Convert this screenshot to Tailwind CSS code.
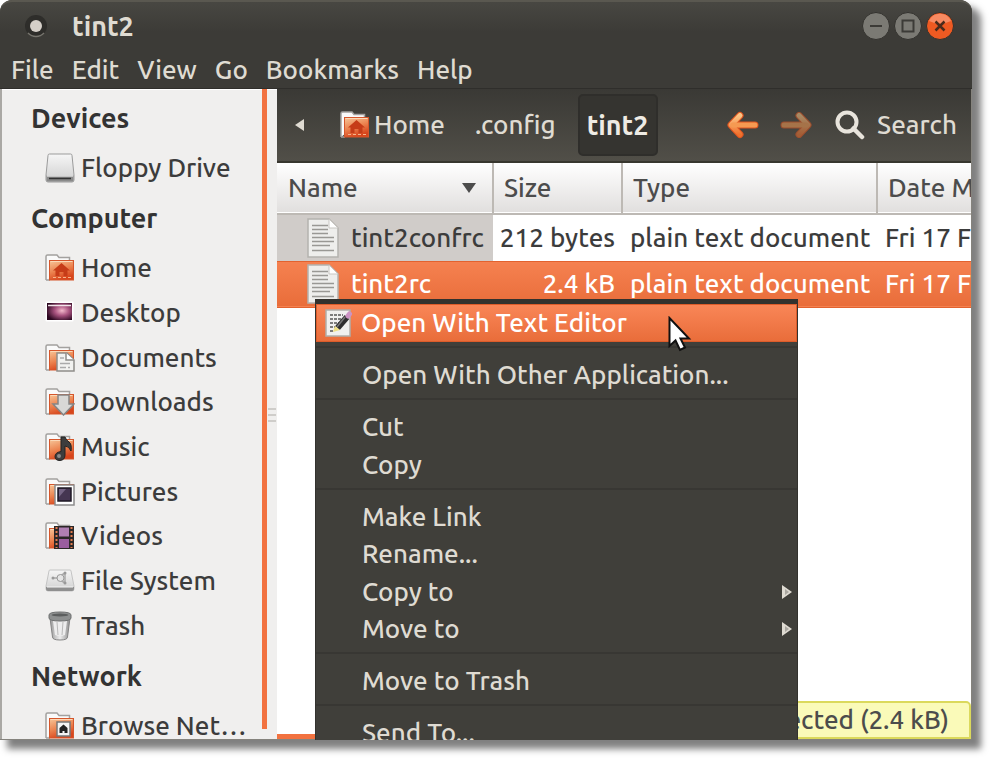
<!DOCTYPE html>
<html lang="en">

<head>
  <meta charset="UTF-8" />
  <meta name="viewport" content="width=device-width, initial-scale=1.0" />
  <title>tint2</title>
  <script src="https://cdn.jsdelivr.net/npm/@tailwindcss/browser@4"></script>
</head>

<body class="h-screen overflow-hidden bg-white pr-7 pb-[27px] font-['Ubuntu','Noto_Sans',sans-serif] text-[26px] leading-8 font-medium text-[#3c3c3c]">

  <!-- Shared icon parts -->
  <svg class="absolute size-0" aria-hidden="true">
    <defs>
      <linearGradient id="orange" x1="0" y1="0" x2="0.4" y2="1">
        <stop offset="0" stop-color="#f7c79a" />
        <stop offset="0.55" stop-color="#ec8450" />
        <stop offset="1" stop-color="#d8451c" />
      </linearGradient>
      <linearGradient id="grey" x1="0" y1="0" x2="0" y2="1">
        <stop offset="0" stop-color="#f6f6f6" />
        <stop offset="1" stop-color="#cfcfcf" />
      </linearGradient>
      <linearGradient id="bin" x1="0" y1="0" x2="1" y2="0">
        <stop offset="0" stop-color="#9a9a9a" />
        <stop offset="0.5" stop-color="#ededed" />
        <stop offset="1" stop-color="#8d8d8d" />
      </linearGradient>
      <radialGradient id="wallpaper" cx="0.6" cy="0.45" r="0.65">
        <stop offset="0" stop-color="#f3b9cb" />
        <stop offset="0.45" stop-color="#a8527f" />
        <stop offset="1" stop-color="#2b0820" />
      </radialGradient>
      <linearGradient id="arrow" x1="0" y1="0" x2="0" y2="1">
        <stop offset="0" stop-color="#fbc585" />
        <stop offset="1" stop-color="#f0702c" />
      </linearGradient>
      <symbol id="folder" viewBox="0 0 30 28">
        <path d="M1 26V2.500Q1 1 2.500 1H12l2 2.500h10.500V8" fill="#fafafa" stroke="#a3a19f" stroke-width="1.500" />
        <path d="M1 26h4" stroke="#a3a19f" stroke-width="1.500" />
        <rect x="4.500" y="6.500" width="24" height="19.500" fill="url(#orange)" stroke="#d5562b" />
        <path d="M5.500 7.500h22" stroke="#fbd9b8" />
      </symbol>
      <symbol id="house" viewBox="0 0 30 28">
        <path d="M16.500 9L8 16.500h2.500V22h4v-4h4v4h4v-5.500H25z" fill="#c63c18" />
        <path d="M8 23.500h3M13 23.500h3M18 23.500h3M23 23.500h3" stroke="#f4b58c" />
      </symbol>
      <symbol id="text-file" viewBox="0 0 32 40">
        <path d="M1 1h21l9 9v29H1z" fill="#eeeeec" stroke="#b4b2ae" stroke-width="1.500" />
        <path d="M22 1v9h9z" fill="#fff" stroke="#c8c6c2" />
        <path d="M5 7.500h16M5 11.500h16M5 15.500h16M5 19.500h22M5 23.500h22M5 27.500h18M5 32.500h22" stroke="#999894" stroke-width="1.500" />
      </symbol>
    </defs>
  </svg>

  <div class="relative flex h-full flex-col rounded-t-[12px] bg-[#3c3b37] shadow-[8px_8px_7px_1px_rgba(0,0,0,0.5)]">

    <!-- Title bar -->
    <header class="flex h-[52px] shrink-0 items-center rounded-t-[12px] border-t-2 border-[#5a5850] bg-linear-to-b from-[#484742] to-[#3c3b37] to-60% pr-[18px] pb-0.5 pl-6">
      <button aria-label="Window menu">
        <svg class="size-6" viewBox="0 0 24 24">
          <circle cx="12" cy="12" r="11" fill="#2e2d2a" />
          <path d="M4 19a11 11 0 0 0 16 0" fill="none" stroke="#77756e" stroke-width="1.500" />
          <circle cx="12" cy="12" r="6" fill="#d5cfc8" />
        </svg>
      </button>
      <h1 class="flex-1 pl-6 text-[27px] font-bold text-[#dfdbd2]">tint2</h1>
      <div class="flex gap-1">
        <button aria-label="Minimize">
          <svg class="size-7" viewBox="0 0 28 28">
            <circle cx="14" cy="14" r="13.500" fill="#7b7a74" stroke="#33322e" />
            <path d="M8 14h12" stroke="#3c3b37" stroke-width="2" />
          </svg>
        </button>
        <button aria-label="Maximize">
          <svg class="size-7" viewBox="0 0 28 28">
            <circle cx="14" cy="14" r="13.500" fill="#7b7a74" stroke="#33322e" />
            <rect x="8.500" y="8.500" width="11" height="11" fill="none" stroke="#3c3b37" stroke-width="2" />
          </svg>
        </button>
        <button aria-label="Close">
          <svg class="size-7" viewBox="0 0 28 28">
            <circle cx="14" cy="14" r="13.500" fill="#ee5a22" stroke="#33322e" />
            <path d="M3 9a12 12 0 0 1 22 0Q14 14 3 9" fill="#f78a62" />
            <path d="M9.500 9.500l9 9M18.500 9.500l-9 9" stroke="#4a2b1c" stroke-width="2.500" />
          </svg>
        </button>
      </div>
    </header>

    <!-- Menu bar -->
    <nav class="flex h-[37px] shrink-0 items-center gap-[18px] border-b border-[#2f2e2b] pl-[11px] text-[#dfdbd2]">
      <button>File</button>
      <button>Edit</button>
      <button>View</button>
      <button>Go</button>
      <button>Bookmarks</button>
      <button>Help</button>
    </nav>

    <div class="flex min-h-0 flex-1 overflow-hidden border-r border-b border-[#85837d] bg-white">

      <!-- Places sidebar -->
      <aside class="flex w-[277px] shrink-0 border-l-2 border-[#aaa8a4] bg-[#f0efee]">
        <div class="w-[260px] overflow-hidden border-t border-white">
          <h2 class="flex h-14 items-center pl-[29px] text-[27px] font-bold text-[#333]">Devices</h2>
          <a href="#" class="flex h-11 items-center gap-1.5 pl-[43px]">
            <svg class="h-[30px] w-[30px]" viewBox="0 0 30 30">
              <path d="M3 2.500Q3 1 4.500 1h21Q27 1 27 2.500L29 22v5q0 2-2 2H3q-2 0-2-2v-5z" fill="url(#grey)" stroke="#9b9b9b" />
              <path d="M1.500 22.500h27V27q0 1.500-1.500 1.500H3q-1.500 0-1.500-1.500z" fill="#8a8a8a" />
              <path d="M2 23h26" stroke="#fff" />
              <path d="M4 25.500h22" stroke="#333" stroke-width="1.500" />
            </svg>
            Floppy Drive
          </a>

          <h2 class="flex h-14 items-center pl-[29px] text-[27px] font-bold text-[#333]">Computer</h2>
          <ul class="grid h-[402px] auto-rows-fr">
            <li>
              <a href="#" class="flex h-full items-center gap-1.5 pl-[43px]">
                <svg class="h-7 w-[30px]" viewBox="0 0 30 28"><use href="#folder" /><use href="#house" /></svg>
                Home
              </a>
            </li>
            <li>
              <a href="#" class="flex h-full items-center gap-1.5 pl-[43px]">
                <svg class="h-7 w-[30px]" viewBox="0 0 30 28">
                  <rect x="0.500" y="2.500" width="28" height="20" rx="1" fill="#fff" />
                  <rect x="2" y="4" width="25" height="17" fill="url(#wallpaper)" />
                  <path d="M3 6.500h23" stroke="#f2e4ea" stroke-width="1.500" />
                </svg>
                Desktop
              </a>
            </li>
            <li>
              <a href="#" class="flex h-full items-center gap-1.5 pl-[43px]">
                <svg class="h-7 w-[30px]" viewBox="0 0 30 28">
                  <use href="#folder" />
                  <path d="M12 9h10l7 7v11H12z" fill="#f2f2f0" stroke="#8f8d89" stroke-width="1.500" />
                  <path d="M21 9v7h8" fill="#fff" stroke="#8f8d89" stroke-width="1.500" />
                  <path d="M15 14h4M15 19.500h10M15 23.500h6M23 23.500h2" stroke="#aaa" stroke-width="1.500" />
                </svg>
                Documents
              </a>
            </li>
            <li>
              <a href="#" class="flex h-full items-center gap-1.5 pl-[43px]">
                <svg class="h-7 w-[30px]" viewBox="0 0 30 28">
                  <use href="#folder" />
                  <path d="M13 7h11v9h5L18.500 27 8 16h5z" fill="#d8d8d6" stroke="#858585" stroke-width="1.500" />
                </svg>
                Downloads
              </a>
            </li>
            <li>
              <a href="#" class="flex h-full items-center gap-1.5 pl-[43px]">
                <svg class="h-7 w-[30px]" viewBox="0 0 30 28">
                  <use href="#folder" />
                  <path d="M16 4h4q1 3 4 5t2 9q-2-5-6-5v9q0 5-5 5.500-5 0-5-4 0-4 6-5z" fill="#3d3d3d" stroke="#222" />
                  <circle cx="14" cy="23" r="2" fill="#8a8a8a" />
                </svg>
                Music
              </a>
            </li>
            <li>
              <a href="#" class="flex h-full items-center gap-1.5 pl-[43px]">
                <svg class="h-7 w-[30px]" viewBox="0 0 30 28">
                  <use href="#folder" />
                  <rect x="10" y="7" width="19" height="20" fill="#fff" stroke="#8c8c8c" stroke-width="1.500" />
                  <rect x="13" y="10" width="13" height="13" fill="#453652" stroke="#1e1824" stroke-width="1.500" />
                  <path d="M14 11h7l-7 8z" fill="#756585" />
                </svg>
                Pictures
              </a>
            </li>
            <li>
              <a href="#" class="flex h-full items-center gap-1.5 pl-[43px]">
                <svg class="h-7 w-[30px]" viewBox="0 0 30 28">
                  <use href="#folder" />
                  <rect x="9" y="4" width="20" height="23" fill="#2b2727" />
                  <rect x="14" y="5.500" width="10" height="9" fill="#b07fb3" />
                  <rect x="14" y="17" width="10" height="9" fill="#9a5d9f" />
                  <path d="M11.500 5v21M26.500 5v21" stroke="#e07b4d" stroke-width="2" stroke-dasharray="2 2" />
                </svg>
                Videos
              </a>
            </li>
            <li>
              <a href="#" class="flex h-full items-center gap-1.5 pl-[43px]">
                <svg class="h-7 w-[30px]" viewBox="0 0 30 28">
                  <path d="M5 3h20q1 0 1 1l3 15v3q0 2-2 2H3q-2 0-2-2v-3L4 4q0-1 1-1z" fill="url(#grey)" stroke="#c4c4c4" />
                  <path d="M1 20h28v2q0 2-2 2H3q-2 0-2-2z" fill="#8f8f8f" />
                  <path d="M2 20h26" stroke="#f5f5f5" />
                  <path d="M7 11h5M12 11l8-5M12 11l8 5M20 6v10" fill="none" stroke="#aaa" stroke-width="1.500" />
                  <circle cx="15.500" cy="11" r="3.500" fill="#e5e5e5" stroke="#999" />
                  <circle cx="20" cy="6" r="1.500" fill="#999" />
                  <circle cx="20" cy="16" r="1.500" fill="#999" />
                  <circle cx="8" cy="11" r="1.500" fill="#999" />
                </svg>
                File System
              </a>
            </li>
            <li>
              <a href="#" class="flex h-full items-center gap-1.5 pl-[43px]">
                <svg class="h-[30px] w-[30px]" viewBox="0 0 30 30">
                  <path d="M5 7l2.500 19q0 3 7.500 3t7.500-3L25 7z" fill="url(#bin)" stroke="#858585" />
                  <path d="M8 10h14l-2 14q-5 2-10 0z" fill="#ededed" />
                  <path d="M12 11l1 13M18 11l-1 13" stroke="#b9b9b9" />
                  <path d="M4 4q0-3 11-3t11 3v3q0 3-11 3T4 7z" fill="#8d8f8f" stroke="#6f7171" />
                  <ellipse cx="15" cy="4" rx="8.500" ry="1.500" fill="#5c5e5e" />
                </svg>
                Trash
              </a>
            </li>
          </ul>

          <h2 class="flex h-14 items-center pl-[29px] text-[27px] font-bold text-[#333]">Network</h2>
          <a href="#" class="flex h-11 items-center gap-1.5 pl-[43px] whitespace-nowrap">
            <svg class="h-7 w-[30px]" viewBox="0 0 30 28">
              <use href="#folder" />
              <rect x="12" y="10" width="13" height="14" fill="#f4f4f4" stroke="#777" stroke-width="1.500" />
              <path d="M18.500 12.500l-4 3.500v5h3v-2h2v2h3v-5z" fill="#222" />
            </svg>
            Browse Net…
          </a>
        </div>
        <div class="mb-[10px] w-[5px] bg-[#f27240]"></div>
        <div class="flex flex-1 flex-col items-center justify-center gap-1 border-t border-white">
          <span class="h-0.5 w-2 bg-[#cfcdca]"></span>
          <span class="h-0.5 w-2 bg-[#cfcdca]"></span>
          <span class="h-0.5 w-2 bg-[#cfcdca]"></span>
        </div>
      </aside>

      <main class="relative flex min-w-0 flex-1 flex-col border-b-[5px] border-[#f27240]">

        <!-- Location toolbar -->
        <div class="flex h-[74px] shrink-0 items-center border-b-2 border-[#38372f] bg-linear-to-b from-[#3a3935] to-[#514f48] pr-3.5 text-[#dfdbd2]">
          <button aria-label="Scroll path left" class="pl-[18px]">
            <svg class="h-3 w-[9px]" viewBox="0 0 9 12"><path d="M9 0v12L0 6z" fill="#dfdbd2" /></svg>
          </button>
          <button class="ml-9 flex items-center gap-1">
            <svg class="h-7 w-[30px]" viewBox="0 0 30 28"><use href="#folder" /><use href="#house" /></svg>
            Home
          </button>
          <button class="ml-[30px]">.config</button>
          <button class="ml-[22px] h-[62px] w-20 rounded-[5px] border-2 border-[#2f2e2b] bg-[#353430] text-[27px] font-bold text-[#eeebe4]">tint2</button>
          <div class="flex flex-1 items-center justify-end">
            <button aria-label="Back">
              <svg class="h-7 w-8" viewBox="0 0 32 28">
                <path d="M13 4.500L4 14l9 9.500M5 14h23" fill="none" stroke="#e0551f" stroke-width="7" stroke-linecap="round" stroke-linejoin="round" />
                <path d="M13 4.500L4 14l9 9.500" fill="none" stroke="url(#arrow)" stroke-width="5" stroke-linecap="round" stroke-linejoin="round" />
                <path d="M6 14h22" stroke="#f59a52" stroke-width="5" stroke-linecap="round" />
              </svg>
            </button>
            <button aria-label="Forward" disabled class="ml-[21px] opacity-55">
              <svg class="h-7 w-8" viewBox="0 0 32 28">
                <path d="M19 4.500L28 14l-9 9.500M4 14h23" fill="none" stroke="#e0551f" stroke-width="7" stroke-linecap="round" stroke-linejoin="round" />
                <path d="M19 4.500L28 14l-9 9.500" fill="none" stroke="url(#arrow)" stroke-width="5" stroke-linecap="round" stroke-linejoin="round" />
                <path d="M4 14h22" stroke="#f59a52" stroke-width="5" stroke-linecap="round" />
              </svg>
            </button>
            <button class="ml-[23px] flex items-center gap-3">
              <svg class="h-[30px] w-[30px]" viewBox="0 0 30 30">
                <circle cx="12" cy="12" r="9.500" fill="none" stroke="#e8e4dc" stroke-width="4" />
                <path d="M18.500 18.500L27 27" stroke="#e8e4dc" stroke-width="4.500" stroke-linecap="round" />
              </svg>
              Search
            </button>
          </div>
        </div>

        <!-- File list -->
        <table class="w-full table-fixed border-collapse whitespace-nowrap">
          <colgroup>
            <col class="w-[216px]" />
            <col class="w-[129px]" />
            <col class="w-[255px]" />
            <col />
          </colgroup>
          <thead>
            <tr class="h-[51px] border-b-2 border-[#bdb9b4] bg-linear-to-b from-white to-[#e1dfde] text-left text-[#4c4c4c]">
              <th class="border-r-2 border-[#bdb9b4] pr-4 pl-[11px] font-medium">
                <span class="flex items-center justify-between">
                  Name
                  <svg class="h-2.5 w-3.5" viewBox="0 0 14 10"><path d="M0 0h14L7 10z" fill="#4c4c4c" /></svg>
                </span>
              </th>
              <th class="border-r-2 border-[#bdb9b4] pl-2.5 font-medium">Size</th>
              <th class="border-r-2 border-[#bdb9b4] pl-2.5 font-medium">Type</th>
              <th class="overflow-hidden pl-2.5 font-medium">Date Modified</th>
            </tr>
          </thead>
          <tbody>
            <tr class="h-[47px]">
              <td class="bg-[#d0ccc9] pl-[30px]">
                <span class="flex items-center gap-3">
                  <svg class="h-10 w-8 shrink-0" viewBox="0 0 32 40"><use href="#text-file" /></svg>
                  tint2confrc
                </span>
              </td>
              <td class="pr-[7px] text-right">212 bytes</td>
              <td class="pl-2">plain text document</td>
              <td class="overflow-hidden pl-2">Fri 17 Feb 2012</td>
            </tr>
            <tr class="h-[46px] border-y border-[#e2622f] bg-linear-to-b from-[#f58150] to-[#e96d3a] text-white">
              <td class="pl-[30px]">
                <span class="flex items-center gap-3">
                  <svg class="h-10 w-8 shrink-0" viewBox="0 0 32 40"><use href="#text-file" /></svg>
                  tint2rc
                </span>
              </td>
              <td class="pr-[7px] text-right">2.4 kB</td>
              <td class="pl-2">plain text document</td>
              <td class="overflow-hidden pl-2">Fri 17 Feb 2012</td>
            </tr>
          </tbody>
        </table>

        <!-- Floating status -->
        <p class="absolute right-0 -bottom-[5px] flex h-[38px] items-center rounded-tr-[5px] border-2 border-[#dbd95c] bg-[#fafab9] pr-5 pl-4 whitespace-nowrap text-[#4c4c4c]">“tint2rc” selected (2.4 kB)</p>
      </main>
    </div>

    <!-- Context menu, cut off by the window's bottom edge -->
    <div class="absolute top-[299px] bottom-0 left-[315px] w-[483px] overflow-hidden border-x border-t-[5px] border-[#33322e] bg-[#403f3a]">
      <div role="menu" class="flex flex-col text-[#dfdbd2]">
        <button role="menuitem" class="flex h-[38px] items-center gap-2 border border-[#dd5c2a] bg-linear-to-b from-[#f98657] to-[#e96d3a] pl-2 text-white">
          <svg class="size-7" viewBox="0 0 28 28">
            <path d="M1 1h24v26H1z" fill="#f0f0ee" stroke="#b0aeaa" stroke-width="1.500" />
            <path d="M5 6h13M5 10h11M5 14h9M5 18h6M5 22h4" stroke="#555" stroke-width="1.500" stroke-dasharray="3 1" />
            <path d="M12.500 19L22 8" stroke="#2e2e2e" stroke-width="6" />
            <path d="M12 18l8-10" stroke="#777" stroke-width="1.500" />
            <path d="M8 23l2-6 5 4z" fill="#efe083" />
            <path d="M23 7l1.500-2" stroke="#cc93c4" stroke-width="5" stroke-linecap="round" />
          </svg>
          Open With Text Editor
        </button>
        <hr class="mt-1 mb-2 border-t-2 border-[#383733]" />
        <button role="menuitem" class="h-[38px] pl-[46px] text-left">Open With Other Application...</button>
        <hr class="mt-1 mb-2 border-t-2 border-[#383733]" />
        <button role="menuitem" class="h-[38px] pl-[46px] text-left">Cut</button>
        <button role="menuitem" class="h-[38px] pl-[46px] text-left">Copy</button>
        <hr class="mt-1 mb-2 border-t-2 border-[#383733]" />
        <div class="grid h-[150px] auto-rows-fr">
          <button role="menuitem" class="pl-[46px] text-left">Make Link</button>
          <button role="menuitem" class="pl-[46px] text-left">Rename...</button>
          <button role="menuitem" class="flex items-center justify-between pr-[5px] pl-[46px]">
            Copy to
            <svg class="h-3.5 w-2.5" viewBox="0 0 10 14"><path d="M0 0v14l10-7z" fill="#dfdbd2" /><path d="M3 4v6l4-3z" fill="#a9a69f" /></svg>
          </button>
          <button role="menuitem" class="flex items-center justify-between pr-[5px] pl-[46px]">
            Move to
            <svg class="h-3.5 w-2.5" viewBox="0 0 10 14"><path d="M0 0v14l10-7z" fill="#dfdbd2" /><path d="M3 4v6l4-3z" fill="#a9a69f" /></svg>
          </button>
        </div>
        <hr class="mt-1 mb-2 border-t-2 border-[#383733]" />
        <button role="menuitem" class="h-[38px] pl-[46px] text-left">Move to Trash</button>
        <hr class="mt-1 mb-2 border-t-2 border-[#383733]" />
        <button role="menuitem" class="h-[38px] pl-[46px] text-left">Send To...</button>
      </div>
    </div>

    <!-- Mouse pointer -->
    <svg class="absolute top-[316px] left-[668px] h-9 w-6" viewBox="0 0 24 36">
      <path d="M1.500 2v28l6-5.500 4.500 9.500 5-2.500-4.500-9H21z" fill="#fff" stroke="#111" stroke-width="2" />
    </svg>
  </div>
</body>

</html>
